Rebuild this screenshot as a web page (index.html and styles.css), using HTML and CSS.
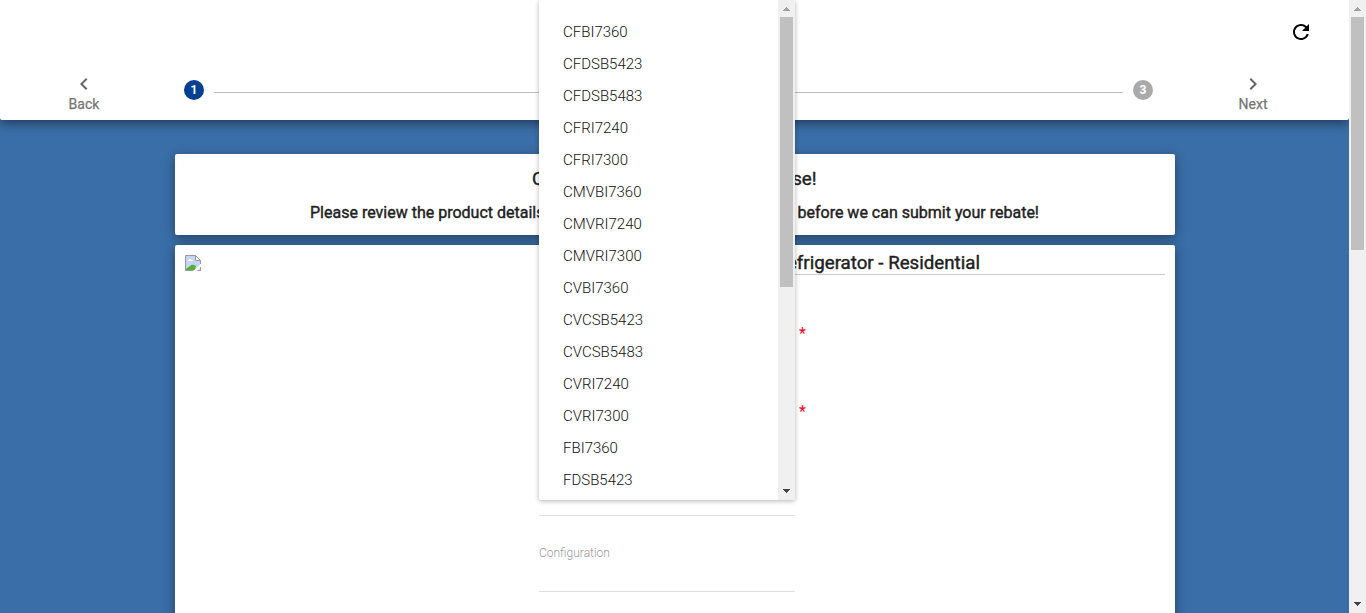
FILE: index.html
```html
<!DOCTYPE html>
<html lang="en">
<head>
<meta charset="utf-8">
<title>Product details</title>
<link rel="stylesheet" href="styles.css">
</head>
<body>
<div class="window">
  <div class="page">
    <header class="header">
      <div class="toolbar">
        <svg class="refresh" viewBox="0 0 24 24"><path d="M17.65 6.35A7.958 7.958 0 0 0 12 4c-4.42 0-7.99 3.58-7.99 8s3.57 8 7.99 8c3.73 0 6.84-2.55 7.73-6h-2.08A5.99 5.99 0 0 1 12 18c-3.31 0-6-2.69-6-6s2.69-6 6-6c1.66 0 3.14.69 4.22 1.78L13 11h7V4l-2.35 2.35z"/></svg>
      </div>
      <nav class="stepper">
        <div class="nav-button">
          <svg viewBox="0 0 24 24"><path d="M15.41 7.41L14 6l-6 6 6 6 1.41-1.41L10.83 12z"/></svg>
          <span>Back</span>
        </div>
        <div class="steps">
          <span class="step active">1</span>
          <span class="track"></span>
          <span class="step">3</span>
        </div>
        <div class="nav-button">
          <svg viewBox="0 0 24 24"><path d="M10 6L8.59 7.41 13.17 12l-4.58 4.59L10 18l6-6z"/></svg>
          <span>Next</span>
        </div>
      </nav>
    </header>
    <main class="content">
      <section class="card intro">
        <h1 class="intro-title"><span>C</span><span>se!</span></h1>
        <h2 class="intro-text"><span>Please review the product details</span><span>before we can submit your rebate!</span></h2>
      </section>
      <section class="card product">
        <div class="picture">
          <svg class="broken" viewBox="0 0 16 16">
            <path d="M.5.5h10l5 5v10H.5z" fill="#fff"/>
            <path d="M1 1h9v5h5v9H1z" fill="#c3d4f5"/>
            <path d="M3 6V5h1V4h2v1h2v1z" fill="#fff"/>
            <path d="M1 15v-1l4-3q2-2 4-1l2 1-1 4z" fill="#57ad36"/>
            <path d="M8 16l8-7v3l-4 4z" fill="#fff"/>
            <path d="M8.500 15.500H.5V.5h10l5 5V9M10.500.5v5h5M15.500 12v3.500h-3" fill="none" stroke="#999"/>
          </svg>
        </div>
        <div class="details">
          <h2 class="product-title">Refrigerator - Residential</h2>
          <div class="field required"><span>*</span></div>
          <div class="field required"><span>*</span></div>
          <div class="field last-select"></div>
          <div class="field"><label>Configuration</label></div>
        </div>
      </section>
    </main>
    <div class="menu">
      <ul class="options">
        <li>CFBI7360</li><li>CFDSB5423</li><li>CFDSB5483</li><li>CFRI7240</li><li>CFRI7300</li>
        <li>CMVBI7360</li><li>CMVRI7240</li><li>CMVRI7300</li><li>CVBI7360</li><li>CVCSB5423</li>
        <li>CVCSB5483</li><li>CVRI7240</li><li>CVRI7300</li><li>FBI7360</li><li>FDSB5423</li>
      </ul>
      <div class="scrollbar">
        <svg class="arrow up" viewBox="0 0 17 17" shape-rendering="crispEdges"><path d="M8 7h1v1h1v1h1v1h1v1H5v-1h1V9h1V8h1z"/></svg>
        <span class="thumb menu-thumb"></span>
        <svg class="arrow down" viewBox="0 0 17 17" shape-rendering="crispEdges"><path d="M5 6h7v1h-1v1h-1v1H9v1H8V9H7V8H6V7H5z"/></svg>
      </div>
    </div>
  </div>
  <div class="scrollbar">
    <svg class="arrow up" viewBox="0 0 17 17" shape-rendering="crispEdges"><path d="M8 7h1v1h1v1h1v1h1v1H5v-1h1V9h1V8h1z"/></svg>
    <span class="thumb page-thumb"></span>
    <svg class="arrow down" viewBox="0 0 17 17" shape-rendering="crispEdges"><path d="M5 6h7v1h-1v1h-1v1H9v1H8V9H7V8H6V7H5z"/></svg>
  </div>
</div>
</body>
</html>
```
FILE: styles.css
```css
* { box-sizing: border-box; }
body { margin: 0; overflow: hidden; font-family: Roboto, sans-serif; color: #212121; }
h1, h2, ul { margin: 0; padding: 0; }
.window { display: flex; height: 613px; }
.page { position: relative; flex: 1; background: #3a6ea8; overflow: hidden; }
.header { height: 120px; background: #fff; border-radius: 0 0 2px 2px; box-shadow: 0 3px 12px rgba(0, 0, 0, .5); }
.toolbar { display: flex; justify-content: flex-end; align-items: center; height: 64px; padding-right: 36px; }
.refresh { width: 24px; height: 24px; }
.stepper { display: flex; height: 56px; }
.nav-button { display: flex; flex-direction: column; align-items: center; width: 168px; padding-top: 8px; font-size: 14px; line-height: 20px; color: #757575; -webkit-text-stroke: .25px; }
.nav-button svg { width: 24px; height: 24px; margin-bottom: -2px; fill: #666; }
.nav-button:last-child { width: 192px; }
.steps { flex: 1; display: flex; padding: 16px 4px 0 16px; }
.step { width: 20px; height: 20px; border-radius: 50%; background: #aaa; color: #fff; font-size: 12px; font-weight: 700; line-height: 20px; text-align: center; }
.step.active { background: #003f91; }
.track { flex: 1; height: 1px; margin: 12px 10px 0; background: #bdbdbd; }
.content { width: 1000px; margin: 34px auto 0 175px; }
.card { background: #fff; border-radius: 2px; box-shadow: 0 3px 12px rgba(0, 0, 0, .4); }
.intro { height: 81px; margin-bottom: 10px; padding-top: 14px; }
.intro-title, .intro-text, .product-title { font-weight: 400; white-space: nowrap; -webkit-text-stroke: .4px; }
.intro-title, .intro-text { display: flex; }
.intro-title { gap: 248px; padding-left: 357px; font-size: 18.72px; line-height: 22px; }
.intro-text { justify-content: space-between; padding: 13px 136px 0 135px; font-size: 16px; line-height: 20px; }
.product { display: flex; justify-content: space-between; height: 500px; padding: 10px; }
.broken { display: block; width: 16px; height: 16px; }
.details { width: 626px; }
.product-title { height: 20px; padding-right: 185px; border-bottom: 1px solid #ccc; font-size: 18.72px; line-height: 16px; text-align: right; }
.field { width: 256px; height: 76px; border-bottom: 1px solid #e0e0e0; }
.required { width: 280px; height: 78px; border: 0; padding: 49px 0 0 260px; font-size: 16px; line-height: 20px; color: #f02; }
.last-select { height: 85px; }
.field label { display: block; padding-top: 29px; font-size: 12px; font-weight: 300; line-height: 16px; color: #9a9a9a; }
.menu { position: absolute; top: 0; left: 539px; display: flex; width: 256px; height: 500px; overflow: hidden; background: #fff; border-radius: 2px; box-shadow: 0 1px 5px rgba(0, 0, 0, .3); }
.options { flex: 1; padding: 16px 24px 0; list-style: none; font-size: 15px; font-weight: 300; line-height: 32px; color: #111; }
.scrollbar { display: flex; flex-direction: column; align-items: center; width: 17px; background: #f0f0f0; }
.arrow { width: 17px; height: 17px; }
.up { fill: #a0a0a0; }
.down { margin-top: auto; fill: #444; }
.thumb { width: 13px; background: #c0c0c0; }
.menu-thumb { height: 270px; }
.page-thumb { height: 233px; }
```
